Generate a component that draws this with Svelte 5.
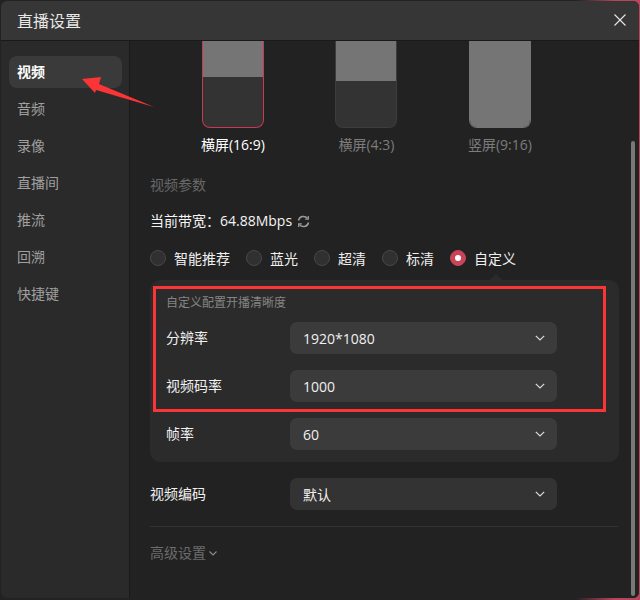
<script>
  const nav = ['视频', '音频', '录像', '直播间', '推流', '回溯', '快捷键'];
  const previews = [
    { label: '横屏(16:9)', top: 36, cls: 'on' },
    { label: '横屏(4:3)', top: 40, cls: '' },
    { label: '竖屏(9:16)', top: 87, cls: 'full' }
  ];
  const radios = ['智能推荐', '蓝光', '超清', '标清', '自定义'];
  const rows = [
    ['分辨率', '1920*1080'],
    ['视频码率', '1000'],
    ['帧率', '60']
  ];
</script>

<div class="page">
  <div class="win">
    <header class="head">
      <h1>直播设置</h1>
      <svg class="close" width="12" height="12" viewBox="0 0 12 12"><path d="M.5.5l11 11M11.5.5l-11 11" stroke="#e6e6e6" stroke-width="1.1" fill="none"/></svg>
    </header>
    <div class="body">
      <nav class="side">
        {#each nav as n, i}
          <div class="nav" class:active={i === 0}>{n}</div>
        {/each}
      </nav>
      <main class="main">
        <div class="previews">
          {#each previews as p}
            <div class="pv {p.cls}">
              <div class="card">
                <div class="fill" style="height:{p.top}px"></div>
              </div>
              <div class="pv-label">{p.label}</div>
            </div>
          {/each}
        </div>

        <div class="section">视频参数</div>

        <div class="band">
          <span>当前带宽：64.88Mbps</span>
          <svg width="13" height="13" viewBox="0 0 13 13" fill="none" stroke="#9a9a9a" stroke-width="1.5">
            <path d="M1.5 5.5A5 5 0 0 1 10.4 3.4"/><path d="M11.5 7.5A5 5 0 0 1 2.6 9.6"/>
            <path d="M11.3 1v3.2H8.2" stroke-width="1.3"/><path d="M1.7 12V8.8h3.1" stroke-width="1.3"/>
          </svg>
        </div>

        <div class="radios">
          {#each radios as r, i}
            <div class="radio-item">
              <span class="radio" class:sel={i === 4}></span>
              <span>{r}</span>
            </div>
          {/each}
        </div>

        <section class="panel">
          <span class="notch"></span>
          <div class="panel-title">自定义配置开播清晰度</div>
          {#each rows as [l, v]}
            <div class="row">
              <label>{l}</label>
              <div class="select">
                <span>{v}</span>
                <svg width="10" height="6" viewBox="0 0 10 6"><path d="M.8.8 5 5 9.2.8" fill="none" stroke="#ddd" stroke-width="1.2"/></svg>
              </div>
            </div>
          {/each}
        </section>

        <div class="row encode">
          <label>视频编码</label>
          <div class="select">
            <span>默认</span>
            <svg width="10" height="6" viewBox="0 0 10 6"><path d="M.8.8 5 5 9.2.8" fill="none" stroke="#ddd" stroke-width="1.2"/></svg>
          </div>
        </div>

        <div class="divider"></div>

        <div class="advanced">
          <span>高级设置</span>
          <svg width="8" height="5" viewBox="0 0 8 5"><path d="M.5.5 4 4 7.5.5" fill="none" stroke="#8a8a8a" stroke-width="1.1"/></svg>
        </div>

        <div class="scrollbar"></div>
      </main>
    </div>
  </div>

  <div class="mark-rect"></div>
  <svg class="mark-arrow" width="80" height="36" viewBox="0 0 80 36">
    <polygon points="2,4 21,2 19,9 74,32 16,15 15,18" fill="#fb3535"/>
  </svg>
</div>

<style>
  :global(body) {
    margin: 0;
    background: #3a3034;
  }
  .page {
    position: relative;
    width: 640px;
    height: 600px;
    overflow: hidden;
    background: linear-gradient(to right, #222 0, #222 90%, #b8455c 96%);
    font-family: "Open Sans", "Noto Sans CJK SC", "Liberation Sans", sans-serif;
    font-size: 14px;
    color: #f0f0f0;
  }
  .win {
    margin: 1px 1px 0 1px;
    height: 597px;
    background: #222;
    border-radius: 6px;
    overflow: hidden;
    display: flex;
    flex-direction: column;
  }
  .head {
    flex: none;
    display: flex;
    align-items: center;
    justify-content: space-between;
    padding: 0 13px 2px 16px;
    background: #363636;
    border-bottom: 1px solid #191919;
    box-sizing: border-box;
    height: 40px;
  }
  h1 {
    margin: 0;
    font-size: 16px;
    font-weight: 400;
    color: #e8e8e8;
  }
  .body {
    flex: 1;
    display: flex;
    min-height: 0;
  }
  .side {
    width: 129px;
    flex: none;
    box-sizing: border-box;
    background: #2a2a2a;
    border-right: 1px solid #1a1a1a;
    padding: 15px 7px 0 8px;
    display: flex;
    flex-direction: column;
    gap: 5px;
  }
  .nav {
    height: 32px;
    line-height: 31px;
    padding-left: 8px;
    border-radius: 8px;
    color: #a0a0a0;
    font-size: 14px;
  }
  .nav.active {
    background: #3a3a3a;
    color: #fff;
    font-weight: 700;
  }
  .main {
    position: relative;
    flex: 1;
    min-width: 0;
    padding: 0 20px;
    box-sizing: border-box;
    background: #222;
  }
  .previews {
    display: flex;
    gap: 71.5px;
    padding-left: 51.9px;
    height: 126px;
  }
  .pv {
    width: 62px;
    display: flex;
    flex-direction: column;
    align-items: center;
  }
  .card {
    width: 62px;
    height: 87px;
    flex: none;
    box-sizing: border-box;
    border: 1px solid #3d3d3d;
    border-top: 0;
    border-radius: 0 0 8px 8px;
    background: #333;
    overflow: hidden;
  }
  .fill {
    background: #757575;
  }
  .pv.on .card {
    border-color: #c63a52;
  }
  .pv.full .card {
    border-color: #757575;
  }
  .pv-label {
    margin-top: 7px;
    white-space: nowrap;
    color: #7c7c7c;
    font-size: 14px;
    line-height: 20px;
  }
  .pv.on .pv-label {
    color: #fff;
  }
  .section {
    margin-top: 8px;
    color: #686868;
    line-height: 20px;
    height: 20px;
  }
  .band {
    margin-top: 16px;
    height: 20px;
    line-height: 20px;
    display: flex;
    align-items: center;
    gap: 5px;
    color: #f4f4f4;
  }
  .radios {
    margin-top: 17px;
    display: flex;
    gap: 16px;
    height: 20px;
    align-items: center;
  }
  .radio-item {
    display: flex;
    align-items: center;
    gap: 8px;
    color: #f0f0f0;
  }
  .radio {
    width: 16px;
    height: 16px;
    box-sizing: border-box;
    border-radius: 50%;
    border: 1px solid #484848;
    background: #303030;
    display: flex;
    align-items: center;
    justify-content: center;
  }
  .radio.sel {
    background: #c94458;
    border-color: #c94458;
  }
  .radio.sel::after {
    content: "";
    width: 6px;
    height: 6px;
    border-radius: 50%;
    background: #fff;
  }
  .panel {
    position: relative;
    margin-top: 12px;
    width: 469px;
    box-sizing: border-box;
    padding: 14px 16px 12px;
    background: #2b2b2b;
    border-radius: 10px;
  }
  .notch {
    position: absolute;
    top: -6px;
    left: 340px;
    width: 0;
    height: 0;
    border-left: 6px solid transparent;
    border-right: 6px solid transparent;
    border-bottom: 6px solid #2b2b2b;
  }
  .panel-title {
    height: 18px;
    line-height: 18px;
    font-size: 12px;
    color: #858585;
    margin-bottom: 10px;
  }
  .row {
    display: flex;
    align-items: center;
    height: 32px;
  }
  .row + .row {
    margin-top: 16px;
  }
  .row label {
    width: 124px;
    flex: none;
    color: #f0f0f0;
    padding-bottom: 2px;
  }
  .select {
    width: 267px;
    height: 32px;
    box-sizing: border-box;
    padding: 0 12px 0 13px;
    display: flex;
    align-items: center;
    justify-content: space-between;
    background: #3b3b3b;
    border-radius: 7px;
    color: #f0f0f0;
  }
  .encode {
    margin-top: 16px;
  }
  .encode label {
    width: 140px;
  }
  .encode .select {
    background: #333;
  }
  .divider {
    margin-top: 16px;
    height: 1px;
    width: 468px;
    background: #343434;
  }
  .advanced {
    margin-top: 16px;
    height: 20px;
    line-height: 20px;
    display: flex;
    align-items: center;
    gap: 3px;
    color: #6c6c6c;
  }
  .scrollbar {
    position: absolute;
    right: 4px;
    top: 100px;
    bottom: 2px;
    width: 4px;
    border-radius: 2px;
    background: #787878;
  }
  .mark-rect {
    position: absolute;
    left: 153px;
    top: 286px;
    width: 453px;
    height: 126px;
    box-sizing: border-box;
    border: 3px solid #fb3535;
  }
  .mark-arrow {
    position: absolute;
    left: 80px;
    top: 75px;
  }
</style>
